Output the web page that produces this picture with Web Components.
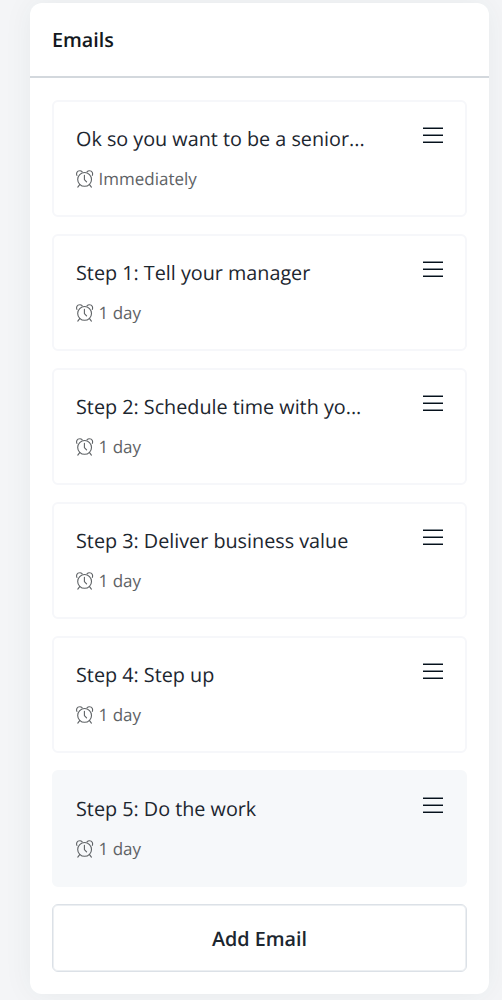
<!DOCTYPE html>
<html lang="en">
<head>
<meta charset="utf-8">
<title>Emails</title>
<style>
html,body{margin:0;height:100%}
body{background:#f4f5f7;font-family:"Open Sans","Noto Sans",sans-serif;color:#1c262f;overflow:hidden;text-rendering:geometricPrecision}
</style>
</head>
<body>
<email-panel heading="Emails">
  <email-step delay="Immediately">Ok so you want to be a senior...</email-step>
  <email-step delay="1 day">Step 1: Tell your manager</email-step>
  <email-step delay="1 day">Step 2: Schedule time with yo...</email-step>
  <email-step delay="1 day">Step 3: Deliver business value</email-step>
  <email-step delay="1 day">Step 4: Step up</email-step>
  <email-step delay="1 day" selected>Step 5: Do the work</email-step>
  <add-button>Add Email</add-button>
</email-panel>
<script>
class BaseElement extends HTMLElement {
  constructor() {
    super();
    this.attachShadow({ mode: 'open' }).innerHTML = this.constructor.markup;
  }
}

class AlarmIcon extends BaseElement {
  static markup = `
    <style>:host{display:block;width:18px;height:18px}svg{display:block}</style>
    <svg width="18" height="18" viewBox="0 0 18 18" fill="none" stroke="currentColor" stroke-width="1.1" stroke-linecap="round" stroke-linejoin="round">
      <circle cx="8.6" cy="9.4" r="6.9"/>
      <path d="M8.4 5.3v4.3l2.2 2.3M3.7 14.6l-1.9 2.5M13.5 14.6l1.9 2.5"/>
      <path d="M.9 5.4C0 3.2 1.2.9 3.5.8c1.1-.1 2 .3 2.6.9M16.3 5.4c.9-2.2-.3-4.5-2.6-4.6-1.1-.1-2 .3-2.6.9"/>
    </svg>`;
}
customElements.define('alarm-icon', AlarmIcon);

class DragHandle extends BaseElement {
  static markup = `
    <style>
      :host{display:flex;flex-direction:column;gap:5px;width:20px}
      i{height:2px;background:linear-gradient(#858d94 50%,#06111b 50%)}
    </style><i></i><i></i><i></i>`;
}
customElements.define('drag-handle', DragHandle);

class EmailStep extends BaseElement {
  static markup = `
    <style>
      :host{display:flex;justify-content:space-between;box-sizing:border-box;height:117px;padding:23px 22px 0;
        border:2px solid #f6f7fa;border-radius:6px;background:#fff}
      :host([selected]){background:#f6f8fa;border-color:#f6f8fa}
      .title{font-size:19.8px;letter-spacing:-.01px;line-height:28px;white-space:nowrap}
      .delay{display:flex;align-items:center;gap:4.5px;margin-top:14px;height:24px;color:#5e6265;font-size:17px;line-height:24px;white-space:nowrap}
      drag-handle{margin-top:2px}
    </style>
    <div><div class="title"><slot></slot></div>
    <div class="delay"><alarm-icon></alarm-icon><span></span></div></div>
    <drag-handle></drag-handle>`;
  connectedCallback() {
    this.shadowRoot.querySelector('span').textContent = this.getAttribute('delay');
  }
}
customElements.define('email-step', EmailStep);

class AddButton extends BaseElement {
  static markup = `
    <style>
      :host{display:block}
      button{display:block;box-sizing:border-box;width:100%;height:68px;padding:1px 0 0;border:1.5px solid #dce1e7;border-radius:6px;
        box-shadow:inset 0 0 0 1px #eceff2;background:#fff;color:#1c262f;font:600 19.75px/28px "Open Sans","Noto Sans",sans-serif;
        text-rendering:inherit}
    </style><button type="button"><slot></slot></button>`;
}
customElements.define('add-button', AddButton);

class EmailPanel extends BaseElement {
  static markup = `
    <style>
      :host{display:block;box-sizing:border-box;width:459.5px;height:991px;margin:3px 0 0 29.5px;border-radius:12px;
        background:#fff;box-shadow:0 0 30px rgba(35,60,75,.06)}
      header{box-sizing:border-box;height:75px;padding:22px 22.5px 0;border-bottom:2px solid #d3d8dd}
      h2{margin:0;font-size:19.75px;font-weight:600;line-height:30px;color:#131920}
      section{display:flex;flex-direction:column;gap:17px;padding:22px 22px 0 22.5px}
    </style>
    <header><h2></h2></header><section><slot></slot></section>`;
  connectedCallback() {
    this.shadowRoot.querySelector('h2').textContent = this.getAttribute('heading');
  }
}
customElements.define('email-panel', EmailPanel);
</script>
</body>
</html>
